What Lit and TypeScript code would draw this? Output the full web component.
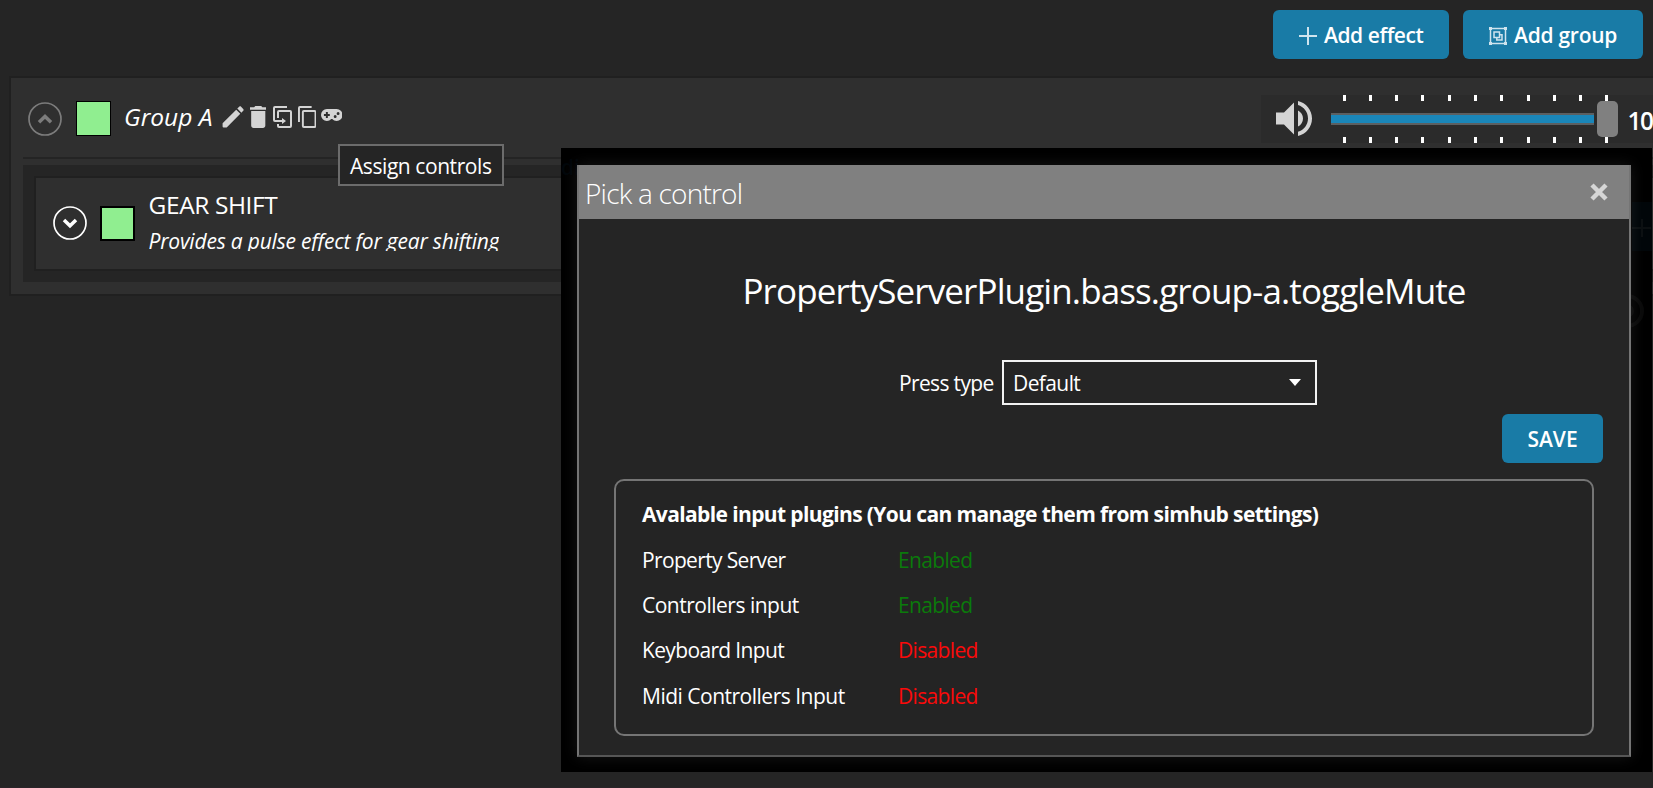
import { LitElement, html, css, svg } from "lit";
import { customElement, property } from "lit/decorators.js";
import { classMap } from "lit/directives/class-map.js";

const glyph = (cls: string, viewBox: string, d: string) => html`
  <svg class=${cls} viewBox=${viewBox} preserveAspectRatio="none" fill="currentColor" aria-hidden="true">
    <path d=${d} />
  </svg>
`;

const PENCIL =
  "M.6 17.3L14.2 3.7L18.3 7.8L4.7 21.4H1.6A1 1 0 0 1 .6 20.4ZM15.3 2.6L17.2.8C17.8.2 18.5.2 19.1.8L21.2 2.9C21.8 3.5 21.8 4.2 21.2 4.8L19.4 6.7Z";
const TRASH = "M6 19c0 1.1.9 2 2 2h8c1.1 0 2-.9 2-2V7H6v12zM19 4h-3.5l-1-1h-5l-1 1H5v2h14V4z";
const DUPLICATE =
  "M11,17H4A2,2 0 0,1 2,15V3A2,2 0 0,1 4,1H16V3H4V15H11V13L15,16L11,19V17M19,21V7H8V13H6V7A2,2 0 0,1 8,5H19A2,2 0 0,1 21,7V21A2,2 0 0,1 19,23H8A2,2 0 0,1 6,21V19H8V21H19Z";
const COPY =
  "M19,21H8V7H19M19,5H8A2,2 0 0,0 6,7V21A2,2 0 0,0 8,23H19A2,2 0 0,0 21,21V7A2,2 0 0,0 19,5M16,1H4A2,2 0 0,0 2,3V17H4V3H16V1Z";
const GAMEPAD =
  "M7,6H17A6,6 0 0,1 23,12A6,6 0 0,1 17,18C15.22,18 13.63,17.23 12.53,16H11.47C10.37,17.23 8.78,18 7,18A6,6 0 0,1 1,12A6,6 0 0,1 7,6M6,9V11H4V13H6V15H8V13H10V11H8V9H6M15.5,12A1.5,1.5 0 0,0 14,13.5A1.5,1.5 0 0,0 15.5,15A1.5,1.5 0 0,0 17,13.5A1.5,1.5 0 0,0 15.5,12M18.5,9A1.5,1.5 0 0,0 17,10.5A1.5,1.5 0 0,0 18.5,12A1.5,1.5 0 0,0 20,10.5A1.5,1.5 0 0,0 18.5,9Z";
const VOLUME =
  "M14,3.23V5.29C16.89,6.15 19,8.83 19,12C19,15.17 16.89,17.84 14,18.7V20.77C18,19.86 21,16.28 21,12C21,7.72 18,4.14 14,3.23M16.5,12C16.5,10.23 15.5,8.71 14,7.97V16C15.5,15.29 16.5,13.76 16.5,12M3,9V15H7L12,20V4L7,9H3Z";

@customElement("expand-toggle")
class ExpandToggle extends LitElement {
  @property({ type: Boolean }) open = false;
  static styles = css`
    :host { display: block; flex: none; width: 34px; height: 34px; }
    svg { display: block; }
    .closed { color: #fff; }
    .open { color: #7c7c7c; }
  `;
  render() {
    return html`<svg class=${classMap({ open: this.open, closed: !this.open })}
      width="34" height="34" viewBox="0 0 34 34" fill="none" stroke="currentColor">
      <circle cx="17" cy="17" r="16" stroke-width="1.7" />
      ${this.open
        ? svg`<path d="M11 20.2L17 14.4L23 20.2" stroke-width="3.5" />`
        : svg`<path d="M11 14L17 19.8L23 14" stroke-width="3.5" />`}
    </svg>`;
  }
}

@customElement("volume-slider")
class VolumeSlider extends LitElement {
  static styles = css`
    :host {
      display: flex; align-items: center; flex: none; box-sizing: border-box;
      width: 420px; height: 48px; padding-left: 15px; background: #2b2b2b; color: #fff;
    }
    .speaker { width: 36px; height: 35px; color: #d4d4d4; margin-right: 19px; flex: none; }
    .scale { display: grid; width: 287px; height: 48px; grid-template-rows: 6px 36px 6px; flex: none; }
    .ticks { display: flex; justify-content: space-between; padding: 0 9px 0 12px; }
    .tick { width: 3px; height: 6px; background: #fff; }
    .rail { display: flex; align-items: center; justify-content: space-between; }
    .track {
      box-sizing: border-box; width: 263px; height: 12px; background: #1a86b9;
      border: solid #5b5f61; border-width: 2px 0;
    }
    .thumb { width: 21px; height: 36px; border-radius: 5px; background: #808080; }
    .value { font-size: 24.5px; font-weight: 600; line-height: 34px; margin: 5px 0 0 10px; letter-spacing: -1.4px; }
  `;
  render() {
    const ticks = html`<div class="ticks">${Array.from({ length: 11 }, () => html`<i class="tick"></i>`)}</div>`;
    return html`
      ${glyph("speaker", "3 3.23 18 17.54", VOLUME)}
      <div class="scale">
        ${ticks}
        <div class="rail"><div class="track"></div><div class="thumb"></div></div>
        ${ticks}
      </div>
      <span class="value">100</span>
    `;
  }
}

@customElement("control-picker")
class ControlPicker extends LitElement {
  static styles = css`
    :host {
      display: block; box-sizing: border-box; position: relative;
      width: 1091px; height: 624px; padding: 17px 20px 14px 16px; background: #000; overflow: hidden;
    }
    .ghost { position: absolute; }
    .word { left: 0; top: 4px; font-size: 21px; font-weight: 600; line-height: 30px; color: #01060a; }
    .btn { left: 1071px; top: 54px; width: 20px; height: 49px; background: #010609; }
    .ring { left: 1050px; top: 145px; }
    .window {
      position: relative; box-sizing: border-box; width: 1054px; height: 592px; border: 2px solid #757575;
      border-top: 0; border-bottom-color: #565656;
      background: #252525; box-shadow: 0 0 14px rgba(255, 255, 255, 0.09);
    }
    .title {
      display: flex; align-items: center; justify-content: space-between;
      height: 54px; padding: 0 21px 0 6px; background: #808080;
      font-size: 28px; font-weight: 300; letter-spacing: -0.78px;
    }
    .title span { padding-top: 2px; }
    .close { width: 18px; height: 18px; color: #d6d6d6; }
    .target {
      height: 48px; line-height: 48px; margin-top: 48px; text-align: center;
      font-size: 35px; letter-spacing: -0.88px;
    }
    .press { display: flex; align-items: center; margin: 45px 0 0 320px; height: 45px; }
    .label { width: 103px; letter-spacing: -0.65px; line-height: 30px; }
    .select {
      display: flex; align-items: center; justify-content: space-between; box-sizing: border-box;
      width: 315px; height: 45px; border: 2px solid #f2f2f2; padding: 0 14px 0 9px; letter-spacing: -0.6px;
    }
    .arrow { width: 12px; height: 7px; margin-top: -1px; }
    .actions { display: flex; justify-content: flex-end; padding: 9px 26px 0 0; }
    .save {
      display: flex; align-items: center; justify-content: center; width: 101px; height: 49px;
      border-radius: 6px; background: #197ba6; font-weight: 600;
    }
    .plugins {
      box-sizing: border-box; width: 980px; height: 257px; margin: 16px 0 0 35px; padding: 17px 0 0 26px;
      border: 2px solid #757575; border-radius: 10px; background: #242424;
    }
    .heading { font-weight: 700; letter-spacing: -0.62px; line-height: 32px; }
    .rows { display: grid; grid-template-columns: 256px auto; grid-auto-rows: 45.4px; align-items: center; letter-spacing: -0.65px; margin-top: 7px; }
    .rows .long { letter-spacing: -0.5px; }
    .on { color: #0b7a0b; }
    .off { color: #fa0a0a; }
  `;
  plugins: [string, boolean][] = [
    ["Property Server", true],
    ["Controllers input", true],
    ["Keyboard Input", false],
    ["Midi Controllers Input", false],
  ];
  render() {
    return html`
      <span class="ghost word">di</span>
      <div class="ghost btn">
        <svg width="20" height="49" viewBox="0 0 20 49" stroke="#0c1012" stroke-width="2"><path d="M0 26H19M10 17V35" /></svg>
      </div>
      <svg class="ghost ring" width="36" height="36" fill="none" stroke="#0a0a0a" stroke-width="4">
        <circle cx="16" cy="18" r="15" /><circle cx="16" cy="18" r="5" />
      </svg>
      <section class="window">
        <header class="title">
          <span>Pick a control</span>
          <svg class="close" viewBox="0 0 18 18" stroke="currentColor" stroke-width="4.5"><path d="M2 2L16 16M16 2L2 16" /></svg>
        </header>
        <div class="target">PropertyServerPlugin.bass.group-a.toggleMute</div>
        <div class="press">
          <span class="label">Press type</span>
          <div class="select">
            <span>Default</span>
            <svg class="arrow" viewBox="0 0 12 7" fill="#fff"><path d="M0 0H12L6 7Z" /></svg>
          </div>
        </div>
        <div class="actions"><div class="save">SAVE</div></div>
        <div class="plugins">
          <div class="heading">Avalable input plugins (You can manage them from simhub settings)</div>
          <div class="rows">
            ${this.plugins.map(
              ([name, enabled]) => html`<span class=${classMap({ long: name.length > 15 })}>${name}</span>
                <span class=${enabled ? "on" : "off"}>${enabled ? "Enabled" : "Disabled"}</span>`
            )}
          </div>
        </div>
      </section>
    `;
  }
}

@customElement("app-root")
class AppRoot extends LitElement {
  static styles = css`
    :host {
      display: block; position: relative; box-sizing: border-box; width: 1653px; height: 788px; overflow: hidden;
      background: #252525; color: #fff; font-family: "Open Sans", "Noto Sans", sans-serif; font-size: 21px;
      line-height: 30px; border-bottom: 1px solid #2a2529; white-space: nowrap;
    }
    .toolbar { display: flex; justify-content: flex-end; gap: 14px; height: 49px; padding: 10px 10px 17px; }
    .button {
      display: flex; align-items: center; box-sizing: border-box; height: 49px; border-radius: 6px;
      background: #197ba6; font-weight: 600; padding-left: 26px;
    }
    .button svg { width: 18px; height: 18px; color: #cfe4ee; margin: 3px 7px 0 0; }
    .effect { width: 176px; letter-spacing: -0.42px; }
    .group { width: 180px; letter-spacing: -0.25px; }
    .card {
      box-sizing: border-box; width: 1680px; height: 220px; margin-left: 9px; padding: 0 0 0 12px;
      border: 2px solid #202020; background: #2f2f2f;
    }
    .head { display: flex; align-items: center; height: 79px; padding-left: 5px; border-bottom: 2px solid #242424; }
    .swatch { box-sizing: border-box; flex: none; width: 35px; height: 35px; background: #90ee90; border: 1px solid #000; margin: 1px 0 0 14px; }
    .thick { border-width: 2px; margin-top: -1px; }
    .name { font-size: 24.5px; font-style: italic; line-height: 34px; margin: -1px 0 0 13px; width: 98px; }
    .tools { display: flex; align-items: flex-start; height: 22px; color: #d4d4d4; margin-top: -2px; }
    .pencil { width: 22px; height: 22px; margin-right: 5.5px; }
    .trash { width: 16.5px; height: 22px; margin-right: 7px; }
    .duplicate { width: 19px; height: 22px; margin-right: 5.5px; }
    .copy { width: 18.5px; height: 22px; margin-right: 4.5px; }
    .gamepad { width: 21.5px; height: 12px; margin-top: 3px; }
    .head expand-toggle { margin-top: 2px; }
    .head volume-slider { margin: 2px 0 0 918.5px; }
    .body { height: 117px; margin-top: 6px; padding: 11px 0 0 11px; box-sizing: border-box; background: #252525; }
    .item {
      display: flex; align-items: center; box-sizing: border-box; height: 95px; padding-left: 16.5px;
      border: 2px solid #202020; background: #2f2f2f;
    }
    .item .swatch { margin-left: 13.5px; }
    .text { margin-left: 13.5px; padding-bottom: 7px; }
    .kind { font-size: 24.5px; line-height: 34px; letter-spacing: -0.4px; margin-top: -1px; }
    .about { font-style: italic; line-height: 30px; height: 25.5px; overflow: hidden; margin-top: 4px; letter-spacing: -0.2px; }
    .item expand-toggle { margin-top: -1px; }
    .tooltip {
      position: absolute; left: 338px; top: 144px; box-sizing: border-box; width: 166px; height: 42px;
      border: 2px solid #6c6c6c; background: #252525; padding-left: 10px; line-height: 40px; letter-spacing: -0.43px;
    }
    control-picker { position: absolute; left: 561px; top: 148px; }
  `;
  render() {
    return html`
      <nav class="toolbar">
        <div class="button effect">
          <svg viewBox="0 0 18 18" stroke="currentColor" stroke-width="2"><path d="M9 0V18M0 9H18" /></svg>
          Add effect
        </div>
        <div class="button group">
          <svg viewBox="0 0 18 18" fill="none" stroke="currentColor" stroke-width="1.5">
            <path d="M1.5 1.5H16.5V16.5H1.5Z" />
            <path d="M5 5H10.5V10.5H5ZM10.5 7.8H13V13H7.8V10.5" />
            <path d="M0 1.5H3M15 1.5H18M0 16.5H3M15 16.5H18" stroke-width="3" />
          </svg>
          Add group
        </div>
      </nav>
      <main class="card">
        <div class="head">
          <expand-toggle open></expand-toggle>
          <div class="swatch"></div>
          <span class="name">Group A</span>
          <div class="tools">
            ${glyph("pencil", "0 0 22 22", PENCIL)}
            ${glyph("trash", "5 3 14 18", TRASH)}
            ${glyph("duplicate", "2 1 19 22", DUPLICATE)}
            ${glyph("copy", "2 1 19 22", COPY)}
            ${glyph("gamepad", "1 6 22 12", GAMEPAD)}
          </div>
          <volume-slider></volume-slider>
        </div>
        <div class="body">
          <div class="item">
            <expand-toggle></expand-toggle>
            <div class="swatch thick"></div>
            <div class="text">
              <div class="kind">GEAR SHIFT</div>
              <div class="about">Provides a pulse effect for gear shifting</div>
            </div>
          </div>
        </div>
      </main>
      <div class="tooltip">Assign controls</div>
      <control-picker></control-picker>
    `;
  }
}
